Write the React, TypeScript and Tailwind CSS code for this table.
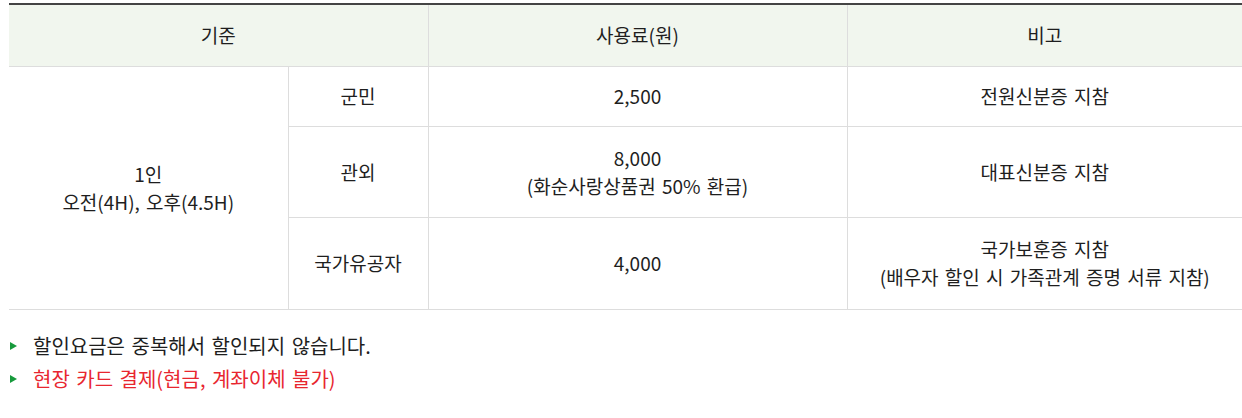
import React from 'react';

const font = { fontFamily: '"Noto Sans CJK KR", "Noto Sans", sans-serif' };

const th = 'bg-[#f1f6ee] border-l border-b border-[#dddddd] font-normal text-[19px] text-[#1e1e1e] text-center align-middle first:border-l-0';
const td = 'border-l border-b border-[#dddddd] text-[19px] text-[#1e1e1e] text-center align-middle leading-[28px] [word-spacing:2px]';

const App: React.FC = () => {
  return (
    <div className="w-[1242px] h-[418px] bg-white pl-[9px] pt-[3px]" style={font}>
      <table className="w-full border-collapse table-fixed border-t-2 border-t-[#444]">
        <colgroup>
          <col className="w-[279px]" />
          <col className="w-[140px]" />
          <col className="w-[419px]" />
          <col />
        </colgroup>
        <thead>
          <tr className="h-[62px]">
            <th colSpan={2} className={th}>기준</th>
            <th className={th}>사용료(원)</th>
            <th className={th}>비고</th>
          </tr>
        </thead>
        <tbody>
          <tr className="h-[60px]">
            <td rowSpan={3} className="border-b border-[#dddddd] text-[19px] text-[#1e1e1e] text-center align-middle leading-[28px] [word-spacing:2px]">
              1인
              <br />
              오전(4H), 오후(4.5H)
            </td>
            <td className={td}>군민</td>
            <td className={td}>2,500</td>
            <td className={td}>전원신분증 지참</td>
          </tr>
          <tr className="h-[91px]">
            <td className={td}>관외</td>
            <td className={td}>
              8,000
              <br />
              (화순사랑상품권 50% 환급)
            </td>
            <td className={td}>대표신분증 지참</td>
          </tr>
          <tr className="h-[92px]">
            <td className={td}>국가유공자</td>
            <td className={td}>4,000</td>
            <td className={td}>
              국가보훈증 지참
              <br />
              (배우자 할인 시 가족관계 증명 서류 지참)
            </td>
          </tr>
        </tbody>
      </table>

      <ul className="mt-[22px] flex flex-col gap-[5px] text-[20px] leading-[28px] [word-spacing:2px]">
        <li className="flex items-center gap-[16px] text-[#1e1e1e]">
          <span className="w-0 h-0 border-y-[4px] border-y-transparent border-l-[7px] border-l-[#179a3c] ml-[1px]" />
          할인요금은 중복해서 할인되지 않습니다.
        </li>
        <li className="flex items-center gap-[16px] text-[#e8262f]">
          <span className="w-0 h-0 border-y-[4px] border-y-transparent border-l-[7px] border-l-[#179a3c] ml-[1px]" />
          현장 카드 결제(현금, 계좌이체 불가)
        </li>
      </ul>
    </div>
  );
};

export default App;
